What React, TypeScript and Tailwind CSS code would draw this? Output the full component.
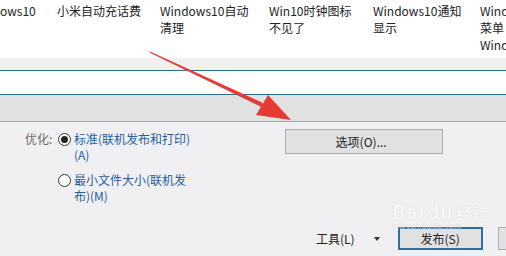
const FONT = '"Noto Sans CJK SC", "Noto Sans", sans-serif'

const TOP_ITEMS: { width: number; lines: string[] }[] = [
  { width: 57, lines: ['ows10'] },
  { width: 103, lines: ['小米自动充话费'] },
  { width: 109, lines: ['Windows10自动', '清理'] },
  { width: 104, lines: ['Win10时钟图标', '不见了'] },
  { width: 107, lines: ['Windows10通知', '显示'] },
  { width: 60, lines: ['Windows10开始', '菜单', 'Windows'] },
]

function Radio({ checked }: { checked?: boolean }) {
  return (
    <span className="mt-[2px] flex h-[13px] w-[13px] shrink-0 items-center justify-center rounded-full border border-[#333] bg-white">
      {checked && <span className="h-[7px] w-[7px] rounded-full bg-[#222]" />}
    </span>
  )
}

function Arrow() {
  // red hand-drawn pointer laid over the dialog
  return (
    <svg className="pointer-events-none absolute left-0 top-0" width={506} height={256}>
      <polygon points="150,51.5 262,102.5 264.5,108.5 149.5,52.5" fill="#e63a35" />
      <polygon points="291,120 256,115 268,95" fill="#e63a35" />
    </svg>
  )
}

export default function App() {
  return (
    <div
      className="relative flex h-[256px] w-[506px] flex-col overflow-hidden bg-[#f0eff1] text-[12px] text-[#222]"
      style={{ fontFamily: FONT }}
    >
      {/* article link strip */}
      <div className="flex h-[58px] shrink-0 overflow-hidden bg-white pt-[2px] leading-[17px]">
        {TOP_ITEMS.map((item, i) => (
          <div key={i} className="shrink-0 whitespace-nowrap" style={{ width: item.width }}>
            {item.lines.map((l, j) => (
              <div key={j}>{l}</div>
            ))}
          </div>
        ))}
      </div>

      <div className="h-[12px] shrink-0 bg-[#f0f0f1]" />
      <div className="h-[25px] shrink-0 border-y border-[#2f6b8b] bg-[#fdfffe]" />
      <div className="h-[27px] shrink-0 border-b border-[#a3a3a3] bg-[#e3e2e3]" />

      {/* dialog body */}
      <div className="flex flex-1 flex-col">
        <div className="flex pt-[7px]">
          <div className="flex pl-[25px] pt-[2px]">
            <span className="w-[33px] leading-[16px] text-[#6b6b6b]">优化:</span>
            <div className="flex flex-col gap-[9px]">
              <div className="flex gap-[3px]">
                <Radio checked />
                <span className="leading-[16px] text-[#1d5fa3]">
                  标准(联机发布和打印)
                  <br />
                  (A)
                </span>
              </div>
              <div className="flex gap-[3px]">
                <Radio />
                <span className="leading-[16px] text-[#1d5fa3]">
                  最小文件大小(联机发
                  <br />
                  布)(M)
                </span>
              </div>
            </div>
          </div>
          <button className="ml-[95px] h-[25px] w-[158px] border border-[#adadad] bg-[#e1e1e1] pr-[6px] text-[12px] text-[#222]">
            选项(O)...
          </button>
        </div>

        <div className="mt-auto flex items-center pb-[6px] pl-[316px]">
          <span className="shrink-0 whitespace-nowrap">工具(L)</span>
          <span className="ml-[19px] h-0 w-0 shrink-0 border-x-[3.5px] border-t-[4px] border-x-transparent border-t-[#333]" />
          <button className="ml-[18px] h-[23px] w-[85px] shrink-0 whitespace-nowrap border-2 border-[#2f6f9f] bg-[#e1e1e1] text-[12px] text-[#222]">
            发布(S)
          </button>
          <div className="ml-[15px] h-[23px] w-[20px] shrink-0 border border-[#adadad] bg-[#e1e1e1]" />
        </div>
      </div>

      {/* baidu watermark */}
      <div className="pointer-events-none absolute left-[392px] top-[201px] flex flex-col items-start leading-none opacity-70">
        <span className="whitespace-nowrap text-[19px] font-bold tracking-[1px] text-[#fafafa] [text-shadow:0_0_1px_#c8c8c8]">
          Bai<span className="ml-[2px]">du</span>
          <span className="ml-[3px] text-[15px]">经验</span>
        </span>
        <span className="mt-[2px] whitespace-nowrap text-[8px] text-[#e4e4e4]">jingyan.baidu.com</span>
      </div>

      <Arrow />
    </div>
  )
}
